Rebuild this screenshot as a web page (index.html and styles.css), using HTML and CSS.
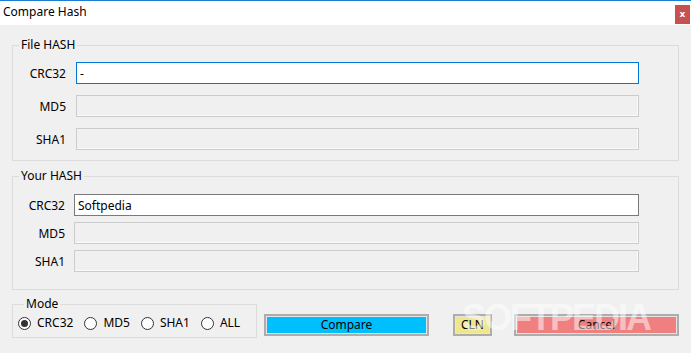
FILE: index.html
```html
<!DOCTYPE html>
<html lang="en">
<head>
    <meta charset="UTF-8">
    <title>Compare Hash</title>
    <link rel="stylesheet" href="styles.css">
</head>
<body>
    <div class="window">
        <div class="titlebar">
            <span class="title">Compare Hash</span>
            <button class="close" type="button">x</button>
        </div>
        <div class="content">
            <fieldset class="group file-group">
                <legend>File HASH</legend>
                <div class="row">
                    <label for="fileCrc">CRC32</label>
                    <input type="text" id="fileCrc" class="active" value="-">
                </div>
                <div class="row">
                    <label for="fileMd5">MD5</label>
                    <input type="text" id="fileMd5" disabled>
                </div>
                <div class="row">
                    <label for="fileSha">SHA1</label>
                    <input type="text" id="fileSha" disabled>
                </div>
            </fieldset>

            <fieldset class="group your-group">
                <legend>Your HASH</legend>
                <div class="row">
                    <label for="yourCrc">CRC32</label>
                    <input type="text" id="yourCrc" value="Softpedia">
                </div>
                <div class="row">
                    <label for="yourMd5">MD5</label>
                    <input type="text" id="yourMd5" disabled>
                </div>
                <div class="row">
                    <label for="yourSha">SHA1</label>
                    <input type="text" id="yourSha" disabled>
                </div>
            </fieldset>

            <div class="bottom">
                <fieldset class="group mode-group">
                    <legend>Mode</legend>
                    <label class="radio"><input type="radio" name="mode" checked> CRC32</label>
                    <label class="radio"><input type="radio" name="mode"> MD5</label>
                    <label class="radio"><input type="radio" name="mode"> SHA1</label>
                    <label class="radio"><input type="radio" name="mode"> ALL</label>
                </fieldset>
                <button type="button" class="btn btn-compare">Compare</button>
                <button type="button" class="btn btn-cln">CLN</button>
                <button type="button" class="btn btn-cancel">Cancel</button>
            </div>
        </div>
        <div class="watermark">SOFTPEDIA</div>
    </div>
</body>
</html>
```

FILE: styles.css
```css
:root {
    --window-bg: #f0f0f0;
    --text-color: #000000;
    --group-border: #dcdcdc;
    --input-border: #7a7a7a;
    --active-border: #0078d7;
    --disabled-border: #cccccc;
    --button-border: #adadad;
}

* {
    box-sizing: border-box;
}

body {
    margin: 0;
    font-family: "Noto Sans", "Open Sans", sans-serif;
    font-size: 12px;
    color: var(--text-color);
    background-color: var(--window-bg);
}

.window {
    position: relative;
    width: 691px;
    height: 353px;
    overflow: hidden;
}

.titlebar {
    height: 25px;
    background-color: #ffffff;
    border-top: 1px solid #1a7fd4;
    display: flex;
    align-items: center;
    justify-content: space-between;
    padding-left: 3px;
    padding-right: 1px;
}

.title {
    font-size: 12px;
    line-height: 16px;
    margin-top: -2px;
}

.close {
    width: 15px;
    height: 19px;
    margin-top: 2px;
    border: none;
    padding: 0;
    background-color: #c75050;
    color: #ffffff;
    font-family: "DejaVu Sans", sans-serif;
    font-weight: bold;
    font-size: 9px;
    line-height: 19px;
}

.content {
    padding: 12px 12px 0 12px;
}

.group {
    margin: 0;
    border: 1px solid var(--group-border);
    padding: 0;
    min-width: 0;
}

.group legend {
    padding: 0 2px;
    margin-left: 6px;
    line-height: 16px;
    height: 16px;
}

.row {
    display: flex;
    align-items: center;
}

.row label {
    text-align: right;
}

.row input {
    height: 22px;
    border: 1px solid var(--input-border);
    background-color: #ffffff;
    font-family: inherit;
    font-size: 12px;
    padding: 0 3px;
    outline: none;
    width: 563px;
}

.row input.active {
    border-color: var(--active-border);
}

.row input:disabled {
    background-color: var(--window-bg);
    border-color: var(--disabled-border);
    box-shadow: inset -1px -1px 0 #fafafa;
}

.file-group {
    padding: 9px 39px 10px 0;
}

.file-group .row + .row {
    margin-top: 11px;
}

.file-group .row label {
    width: 53px;
    margin-right: 10px;
}

.your-group {
    margin-top: 7px;
    padding: 10px 39px 17px 0;
}

.your-group .row + .row {
    margin-top: 6px;
}

.your-group .row label {
    width: 52px;
    margin-right: 9px;
}

.your-group .row input {
    width: 565px;
}

.bottom {
    display: flex;
    align-items: flex-end;
    margin-top: 6px;
}

.mode-group {
    width: 245px;
    display: flex;
    padding: 3px 0 6px 5px;
}

.radio {
    display: flex;
    align-items: center;
    gap: 6px;
    margin-right: 11px;
    line-height: 16px;
}

.radio input {
    appearance: none;
    -webkit-appearance: none;
    margin: 0;
    width: 13px;
    height: 13px;
    border: 1px solid #333333;
    border-radius: 50%;
    background-color: #ffffff;
    display: grid;
    place-content: center;
}

.radio input:checked::before {
    content: "";
    width: 7px;
    height: 7px;
    border-radius: 50%;
    background-color: #333333;
}

.btn {
    height: 22px;
    margin-bottom: 2px;
    border: 2px solid var(--button-border);
    box-shadow: inset 0 0 0 1px #e5e5e5;
    font-family: inherit;
    font-size: 12px;
    line-height: 16px;
    padding: 0;
    color: var(--text-color);
}

.btn-compare {
    width: 165px;
    margin-left: 7px;
    background-color: #00bfff;
}

.btn-cln {
    width: 39px;
    margin-left: 24px;
    background-color: #f0e68c;
}

.btn-cancel {
    width: 165px;
    margin-left: 22px;
    background-color: #f08080;
}

.watermark {
    position: absolute;
    left: 462px;
    top: 298px;
    font-family: "Liberation Sans", sans-serif;
    font-weight: bold;
    font-size: 36px;
    line-height: 40px;
    letter-spacing: -2px;
    color: rgba(255, 255, 255, 0.5);
    pointer-events: none;
}
```
